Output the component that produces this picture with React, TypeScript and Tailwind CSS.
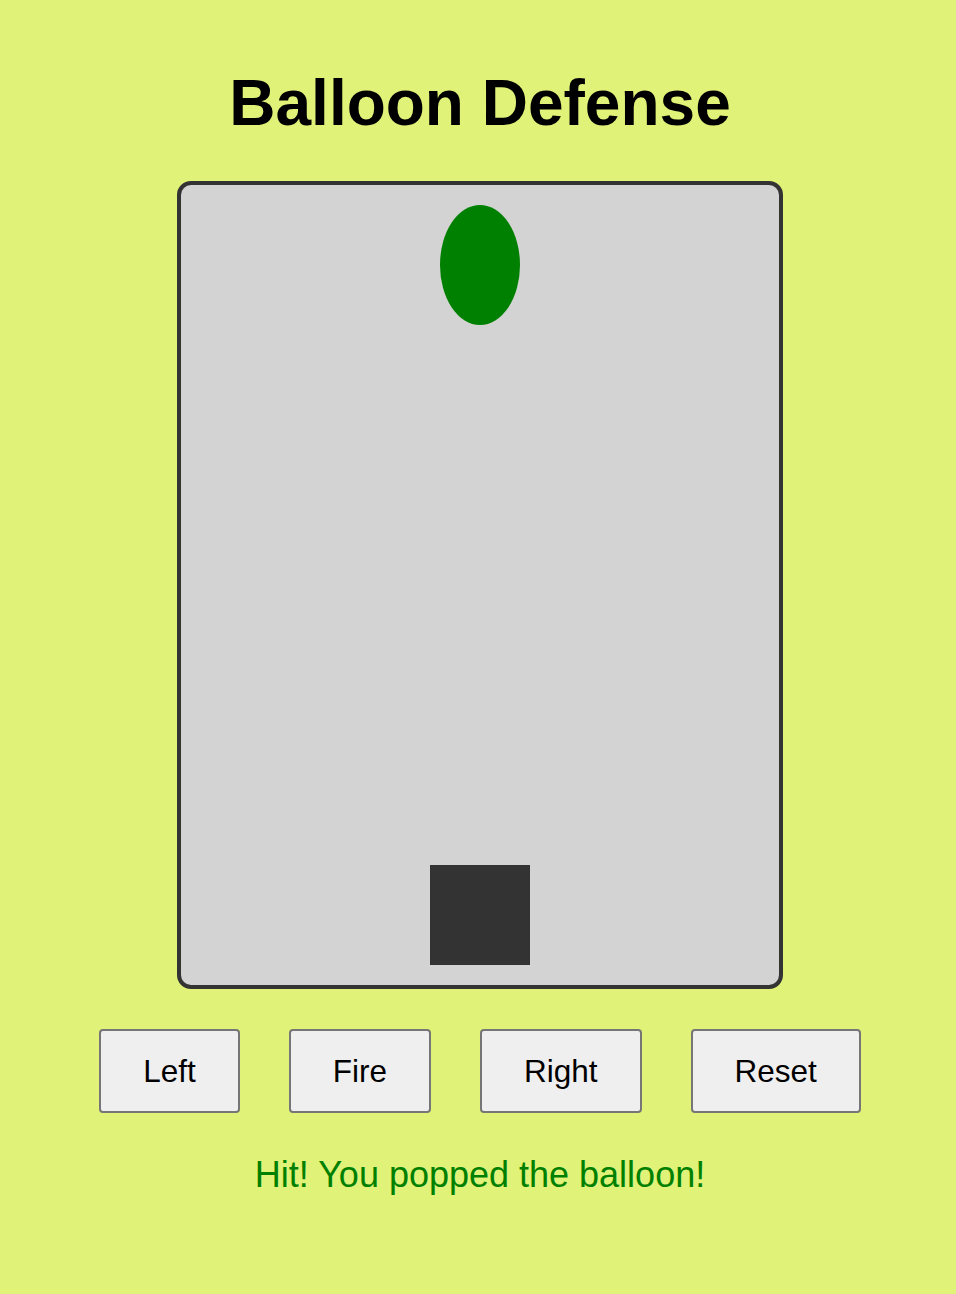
import { useState } from "react";

const buttons = ["Left", "Fire", "Right", "Reset"];

export default function App() {
  const [message] = useState("Hit! You popped the balloon!");

  return (
    <div
      className="min-h-[1294px] bg-[#e0f277] pl-[4px] flex flex-col items-center"
      style={{ fontFamily: '"Liberation Sans", Arial, sans-serif' }}
    >
      {/* Title */}
      <h1 className="pt-[66px] text-[64px] leading-[74px] font-bold text-black">Balloon Defense</h1>

      {/* Game area */}
      <div className="relative mt-[41px] w-[606px] h-[808px] border-4 border-[#333333] rounded-[14px] bg-[#d3d3d3]">
        <div className="absolute left-[259px] top-[20px] w-[80px] h-[120px] rounded-[50%] bg-[#008000]" />
        <div className="absolute left-[249px] bottom-[20px] w-[100px] h-[100px] bg-[#333333]" />
      </div>

      {/* Controls */}
      <div className="mt-[40px] flex gap-[49px]">
        {buttons.map((b) => (
          <button
            key={b}
            className="h-[84px] px-[42px] border-2 border-[#767676] rounded-[4px] bg-[#efefef] text-[31.5px] leading-[36px] text-black"
          >
            {b}
          </button>
        ))}
      </div>

      {/* Status */}
      <p className="mt-[41px] text-[36px] leading-[42px] text-[#008000]">{message}</p>
    </div>
  );
}
